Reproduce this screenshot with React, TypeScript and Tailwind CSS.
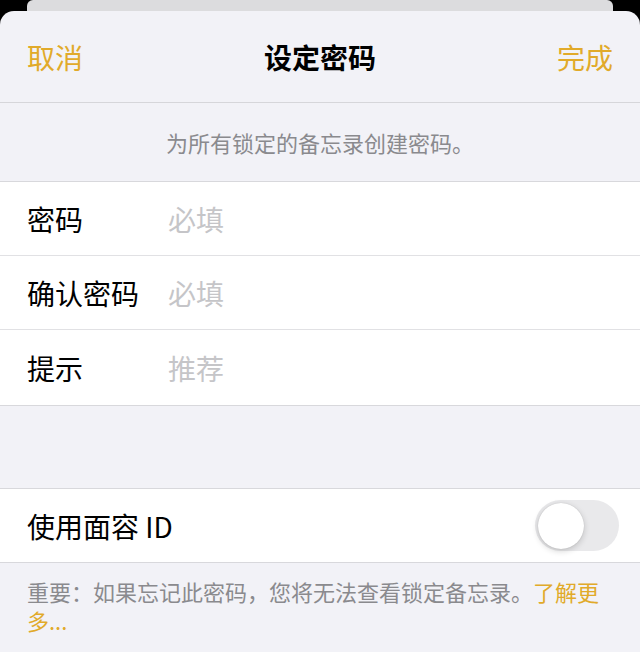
import React from 'react';

const FONT = { fontFamily: '"Noto Sans CJK SC", "Noto Sans", sans-serif' };

const FIELDS = [
  { label: '密码', placeholder: '必填', h: 'h-[73px]', sep: true },
  { label: '确认密码', placeholder: '必填', h: 'h-[73px]', sep: true },
  { label: '提示', placeholder: '推荐', h: 'h-[75px]', sep: false },
];

const Toggle = () => (
  <div className="w-[84px] h-[51px] rounded-full bg-[#e9e9eb] p-[2.5px] flex items-center">
    <div className="w-[46px] h-[46px] rounded-full bg-white shadow-[0_2px_6px_rgba(0,0,0,0.18),0_0_1px_rgba(0,0,0,0.2)]" />
  </div>
);

export default function App() {
  return (
    <div className="w-[640px] h-[652px] bg-black overflow-hidden flex flex-col" style={FONT}>
      {/* card behind the sheet */}
      <div className="h-[11px] mx-[27px] shrink-0 rounded-t-[6px] bg-[#dcdcde]" />

      {/* sheet */}
      <div className="flex-1 bg-[#f2f2f7] rounded-t-[14px] flex flex-col">
        <div className="h-[92px] flex items-center justify-between px-[27px] border-b border-[#d6d6da] relative">
          <button className="text-[28px] text-[#e1aa2a] leading-none">取消</button>
          <h1 className="absolute left-1/2 -translate-x-1/2 text-[28px] font-bold text-black leading-none">设定密码</h1>
          <button className="text-[28px] text-[#e1aa2a] leading-none">完成</button>
        </div>

        <div className="h-[78px] flex items-center justify-center text-[22px] text-[#8a8a8e]">
          为所有锁定的备忘录创建密码。
        </div>

        <div className="bg-white border-y border-[#d8d8dc]">
          {FIELDS.map(f => (
            <div key={f.label} className={`pl-[27px] ${f.sep ? 'border-b border-[#e1e1e4]' : ''}`}>
              <div className={`${f.h} flex items-center text-[28px]`}>
                <span className="w-[141px] text-black">{f.label}</span>
                <span className="text-[#c5c5c8]">{f.placeholder}</span>
              </div>
            </div>
          ))}
        </div>

        <div className="h-[82px]" />

        <div className="bg-white border-y border-[#d8d8dc] h-[75px] pl-[27px] pr-[21px] flex items-center justify-between">
          <span className="text-[28px] text-black">使用面容 ID</span>
          <Toggle />
        </div>

        <p className="px-[27px] pt-[14px] text-[22px] leading-[29px] text-[#8a8a8e]">
          重要：如果忘记此密码，您将无法查看锁定备忘录。<span className="text-[#e1aa2a]">了解更多...</span>
        </p>
      </div>
    </div>
  );
}
